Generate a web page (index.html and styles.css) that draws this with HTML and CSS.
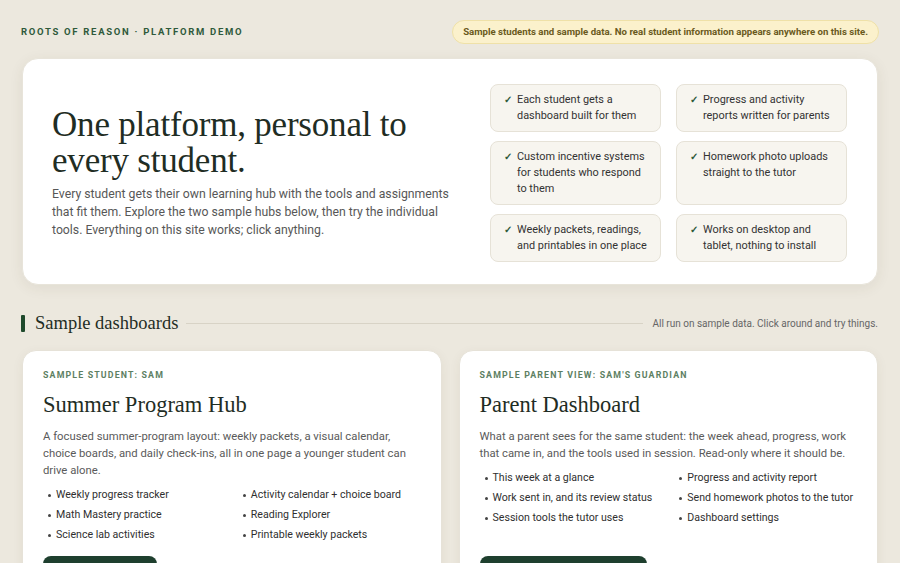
FILE: index.html
```html
<!DOCTYPE html>
<html lang="en">
<head>
<meta charset="utf-8">
<title>Roots of Reason · Platform Demo</title>
<link rel="stylesheet" href="styles.css">
</head>
<body>
<div class="page">
  <header class="topbar">
    <div class="brand">ROOTS OF REASON · PLATFORM DEMO</div>
    <div class="notice">Sample students and sample data. No real student information appears anywhere on this site.</div>
  </header>

  <section class="hero">
    <div class="hero-text">
      <h1 class="hero-title">One platform, personal to every student.</h1>
      <p class="hero-lead">Every student gets their own learning hub with the tools and assignments that fit them. Explore the two sample hubs below, then try the individual tools. Everything on this site works; click anything.</p>
    </div>
    <ul class="features">
      <li class="feature"><span class="check">✓</span><span>Each student gets a dashboard built for them</span></li>
      <li class="feature"><span class="check">✓</span><span>Progress and activity reports written for parents</span></li>
      <li class="feature"><span class="check">✓</span><span>Custom incentive systems for students who respond to them</span></li>
      <li class="feature"><span class="check">✓</span><span>Homework photo uploads straight to the tutor</span></li>
      <li class="feature"><span class="check">✓</span><span>Weekly packets, readings, and printables in one place</span></li>
      <li class="feature"><span class="check">✓</span><span>Works on desktop and tablet, nothing to install</span></li>
    </ul>
  </section>

  <div class="section-head">
    <span class="section-bar"></span>
    <h2 class="section-title">Sample dashboards</h2>
    <span class="section-rule"></span>
    <span class="section-note">All run on sample data. Click around and try things.</span>
  </div>

  <div class="cards">
    <article class="card">
      <div class="eyebrow">SAMPLE STUDENT: SAM</div>
      <h3 class="card-title">Summer Program Hub</h3>
      <p class="card-desc">A focused summer-program layout: weekly packets, a visual calendar, choice boards, and daily check-ins, all in one page a younger student can drive alone.</p>
      <ul class="card-list">
        <li>Weekly progress tracker</li>
        <li>Activity calendar + choice board</li>
        <li>Math Mastery practice</li>
        <li>Reading Explorer</li>
        <li>Science lab activities</li>
        <li>Printable weekly packets</li>
      </ul>
      <a class="btn btn-student" href="#">Open student hub</a>
    </article>
    <article class="card">
      <div class="eyebrow">SAMPLE PARENT VIEW: SAM'S GUARDIAN</div>
      <h3 class="card-title">Parent Dashboard</h3>
      <p class="card-desc">What a parent sees for the same student: the week ahead, progress, work that came in, and the tools used in session. Read-only where it should be.</p>
      <ul class="card-list">
        <li>This week at a glance</li>
        <li>Progress and activity report</li>
        <li>Work sent in, and its review status</li>
        <li>Send homework photos to the tutor</li>
        <li>Session tools the tutor uses</li>
        <li>Dashboard settings</li>
      </ul>
      <a class="btn btn-parent" href="#">Open parent dashboard</a>
    </article>
  </div>
</div>
</body>
</html>
```

FILE: styles.css
```css
* { box-sizing: border-box; }
html, body { margin: 0; padding: 0; }
body {
  background: #ece8de;
  font-family: Roboto, "Liberation Sans", sans-serif;
  color: #2b2b2b;
}
.page {
  padding: 20px 22px 0 22px;
}
.topbar {
  display: flex;
  justify-content: space-between;
  align-items: center;
  height: 23px;
}
.brand {
  font-size: 9.5px;
  font-weight: 700;
  letter-spacing: 1.7px;
  color: #2f5a3b;
  margin-left: -1px;
}
.notice {
  background: #fbf1cc;
  border: 1px solid #efe1a8;
  color: #6a5a1d;
  font-size: 9.65px;
  font-weight: 700;
  border-radius: 999px;
  height: 24px;
  display: flex;
  align-items: center;
  padding: 0 10px;
  margin-right: -1px;
}
.hero {
  margin-top: 15px;
  background: #fff;
  border-radius: 16px;
  box-shadow: 0 3px 14px rgba(80, 70, 40, 0.08);
  border: 1px solid #e8e4da;
  display: grid;
  grid-template-columns: 1fr 357px;
  column-gap: 30px;
  align-items: center;
  padding: 25px 30px 22px 29px;
}
.hero-title {
  margin: 0 0 6px 0;
  font-family: "Liberation Serif", serif;
  font-weight: 400;
  font-size: 35px;
  line-height: 36px;
  color: #1f2d24;
  letter-spacing: -0.2px;
  max-width: 380px;
}
.hero-lead {
  margin: 0;
  font-size: 12.25px;
  line-height: 18px;
  color: #575757;
}
.features {
  list-style: none;
  margin: 0;
  padding: 0;
  display: grid;
  grid-template-columns: 1fr 1fr;
  gap: 9px 15px;
}
.feature {
  background: #f7f5ef;
  border: 1px solid #e6e2d7;
  border-radius: 8px;
  padding: 7px 10px 7px 13px;
  font-size: 10.9px;
  line-height: 16px;
  color: #333;
  display: flex;
  gap: 5px;
  align-items: flex-start;
}
.check {
  color: #2f5a3b;
  font-size: 10px;
  font-weight: 700;
  width: 8px;
  flex: none;
}
.section-head {
  display: flex;
  align-items: center;
  margin-top: 28px;
  height: 20px;
  margin-left: -1px;
}
.section-bar {
  width: 4px;
  height: 17px;
  background: #1f4a2c;
  border-radius: 1px;
  margin-right: 10px;
}
.section-title {
  margin: 0;
  font-family: "Liberation Serif", serif;
  font-weight: 400;
  font-size: 18.5px;
  color: #1f2d24;
}
.section-rule {
  flex: 1;
  height: 1px;
  background: #d8d3c6;
  margin: 0 9px 0 8px;
}
.section-note {
  font-size: 10px;
  color: #666;
}
.cards {
  margin-top: 17px;
  display: grid;
  grid-template-columns: 1fr 1fr;
  gap: 17px;
}
.card {
  background: #fff;
  border: 1px solid #e6e2d8;
  border-radius: 14px;
  padding: 19px 20px 20px 20px;
  box-shadow: 0 3px 12px rgba(80, 70, 40, 0.06);
  display: flex;
  flex-direction: column;
  align-items: flex-start;
}
.eyebrow {
  font-size: 8.8px;
  font-weight: 700;
  letter-spacing: 1.15px;
  color: #5d7f63;
}
.card-title {
  margin: 11px 0 9px 0;
  font-family: "Liberation Serif", serif;
  font-weight: 400;
  font-size: 22.5px;
  line-height: 28px;
  color: #1f2d24;
}
.card-desc {
  margin: 0 0 6px 0;
  font-size: 11.3px;
  line-height: 17px;
  color: #5a5a5a;
}
.card-list {
  margin: 0;
  padding: 0 0 0 5px;
  list-style: none;
  display: grid;
  grid-template-columns: 1fr 1fr;
  column-gap: 17px;
  font-size: 10.6px;
  line-height: 20px;
  color: #2f2f2f;
  align-self: stretch;
}
.card-list li {
  position: relative;
  padding-left: 8px;
}
.card-list li::before {
  content: "";
  position: absolute;
  left: 0;
  top: 9px;
  width: 3px;
  height: 3px;
  border-radius: 50%;
  background: #444;
}
.btn {
  display: inline-block;
  height: 32px;
  line-height: 32px;
  background: #1e3f2e;
  color: #fff;
  border-radius: 8px;
  font-size: 11px;
  font-weight: 500;
  text-decoration: none;
  padding: 0 14px;
}
.card-list + .btn { margin-top: 11px; }
.card:last-child .btn { margin-top: auto; }
.btn-student { width: 114px; }
.btn-parent { width: 167px; }
```
